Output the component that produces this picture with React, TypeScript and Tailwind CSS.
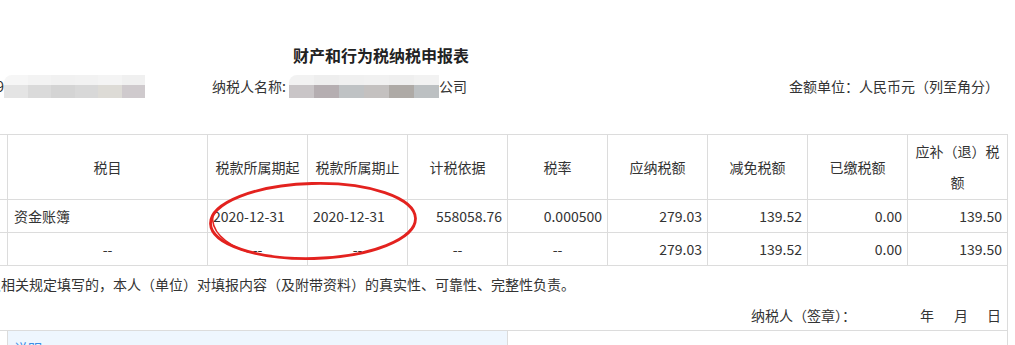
import React from "react";

const cell = "border-r border-b border-[#dcdcdc]";

const headers = ["税款所属期起", "税款所属期止", "计税依据", "税率", "应纳税额", "减免税额", "已缴税额"];

const idBlur = [
  ["bg-[#f6f6f6]", "bg-[#e4e4e4]"],
  ["bg-[#f3f3f3]", "bg-[#dadada]"],
  ["bg-[#f1f1f1]", "bg-[#d4d4d4]"],
  ["bg-[#f2f2f2]", "bg-[#d8d8d8]"],
  ["bg-[#f4f4f4]", "bg-[#dddbd6]"],
  ["bg-[#f0f0f0]", "bg-[#cfcacd]"],
];

const nameBlur = [
  ["bg-[#f2f2f2]", "bg-[#c9c5c7]"],
  ["bg-[#eeeeee]", "bg-[#b5aeb1]"],
  ["bg-[#f0f0f0]", "bg-[#bfc2c4]"],
  ["bg-[#f1f1f1]", "bg-[#c4c1c0]"],
  ["bg-[#efefef]", "bg-[#aeaaa6]"],
  ["bg-[#f2f2f2]", "bg-[#bcc0c2]"],
];

function Mosaic({ blocks, wide }: { blocks: string[][]; wide?: boolean }) {
  return (
    <div className="flex h-[23px] overflow-hidden rounded-tl-[8px]">
      {blocks.map((b, i) => (
        <div key={i} className={`flex flex-col ${wide ? "w-[25px]" : "w-[23.5px]"}`}>
          <div className={`h-[10px] ${b[0]}`} />
          <div className={`h-[13px] ${b[1]}`} />
        </div>
      ))}
    </div>
  );
}

function Ellipse() {
  return (
    <svg
      className="pointer-events-none absolute left-[204px] top-[178px]"
      width="216"
      height="86"
      viewBox="0 0 216 86"
    >
      <ellipse
        cx="109"
        cy="43"
        rx="102.5"
        ry="37.5"
        fill="none"
        stroke="#e3221f"
        strokeWidth="2.8"
        transform="rotate(-1.5 109 43)"
      />
      <path d="M9 36 C 6 52, 20 66, 44 74" fill="none" stroke="#e3221f" strokeWidth="1.6" />
    </svg>
  );
}

export default function App() {
  return (
    <div className="relative w-full overflow-hidden bg-white font-['Noto_Sans_CJK_SC',sans-serif] text-[14px] text-[#333333]">
      <div className="-ml-[253px] w-[1261px]">
        <div className="pl-[7px] pt-[43px] text-center text-[16px] font-bold leading-[24px] text-[#222222]">
          财产和行为税纳税申报表
        </div>

        <div className="mt-[7px] flex h-[24px] items-center">
          <div className="flex w-[465px] items-center justify-end pr-[67px]">
            <span className="whitespace-nowrap">纳税人识别号（统一社会信用代码）：9</span>
            <Mosaic blocks={idBlur} />
          </div>
          <div className="flex items-center">
            <span>纳税人名称:</span>
            <div className="ml-[3px]">
              <Mosaic blocks={nameBlur} wide />
            </div>
            <span>公司</span>
          </div>
          <div className="ml-auto pr-[9px]">金额单位：人民币元（列至角分）</div>
        </div>

        <div className="mt-[36px] grid w-[1261px] grid-cols-[260px_200px_repeat(8,100px)] border-l border-t border-[#dcdcdc]">
          <div className={`${cell} flex h-[65px] items-center justify-center`}>序号</div>
          <div className={`${cell} flex items-center justify-center`}>税目</div>
          {headers.map((h) => (
            <div key={h} className={`${cell} flex items-center justify-center`}>
              {h}
            </div>
          ))}
          <div className={`${cell} flex items-center justify-center px-[6px] text-center leading-[31px]`}>
            应补（退）税额
          </div>

          <div className={`${cell} flex h-[33px] items-center justify-center`}>1</div>
          <div className={`${cell} flex items-center px-[6px]`}>资金账簿</div>
          <div className={`${cell} flex items-center px-[5px]`}>2020-12-31</div>
          <div className={`${cell} flex items-center px-[5px]`}>2020-12-31</div>
          <div className={`${cell} flex items-center justify-end px-[5px]`}>558058.76</div>
          <div className={`${cell} flex items-center justify-end px-[5px]`}>0.000500</div>
          <div className={`${cell} flex items-center justify-end px-[5px]`}>279.03</div>
          <div className={`${cell} flex items-center justify-end px-[5px]`}>139.52</div>
          <div className={`${cell} flex items-center justify-end px-[5px]`}>0.00</div>
          <div className={`${cell} flex items-center justify-end px-[5px]`}>139.50</div>

          <div className={`${cell} flex h-[33px] items-center justify-center`}>合计</div>
          <div className={`${cell} flex items-center justify-center`}>--</div>
          <div className={`${cell} flex items-center justify-center`}>--</div>
          <div className={`${cell} flex items-center justify-center`}>--</div>
          <div className={`${cell} flex items-center justify-center`}>--</div>
          <div className={`${cell} flex items-center justify-center`}>--</div>
          <div className={`${cell} flex items-center justify-end px-[5px]`}>279.03</div>
          <div className={`${cell} flex items-center justify-end px-[5px]`}>139.52</div>
          <div className={`${cell} flex items-center justify-end px-[5px]`}>0.00</div>
          <div className={`${cell} flex items-center justify-end px-[5px]`}>139.50</div>

          <div className={`${cell} col-span-10 flex h-[65px] flex-col pl-[1px] pr-[6px] pt-[7px]`}>
            <div className="leading-[22px]">
              谨声明：本表是根据国家税收法律法规及相关规定填写的，本人（单位）对填报内容（及附带资料）的真实性、可靠性、完整性负责。
            </div>
            <div className="mt-[9px] flex justify-end leading-[22px]">
              <span>纳税人（签章）：</span>
              <span className="ml-[64px]">年</span>
              <span className="ml-[20px]">月</span>
              <span className="ml-[19px]">日</span>
            </div>
          </div>

          <div className={`${cell} h-[30px]`} />
          <div className={`${cell} col-span-4 bg-[#eef6fe] px-[6px] pt-[7px] leading-[20px] text-[#3a8ee6]`}>
            说明
          </div>
          <div className={`${cell} col-span-5`} />
        </div>
      </div>
      <Ellipse />
    </div>
  );
}
